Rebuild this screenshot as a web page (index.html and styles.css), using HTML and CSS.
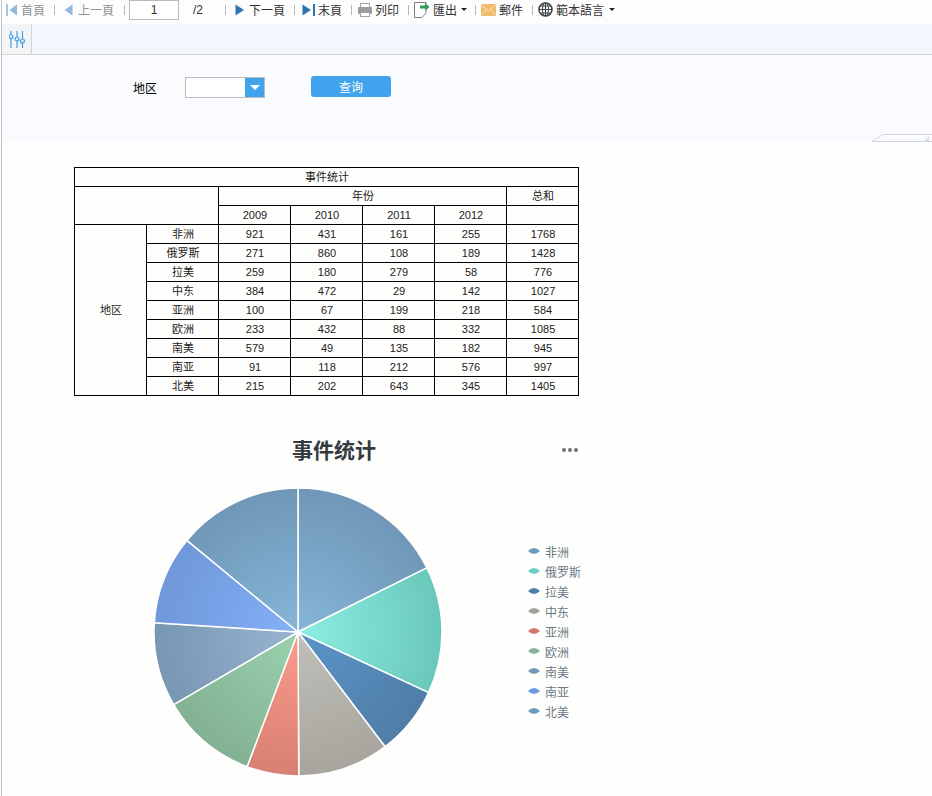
FILE: index.html
```html
<!DOCTYPE html>
<html lang="zh">
<head>
<meta charset="utf-8">
<title>事件统计</title>
<link rel="stylesheet" href="styles.css">
</head>
<body>
<div class="page">
<div class="toolbar">
  <span class="tool dim"><svg class="ic" width="12" height="14" viewBox="0 0 12 14"><rect x="0" y="1" width="2" height="12" fill="#a9c6e0"/><path d="M11 1.500V12.500L3.500 7Z" fill="#8fb8dc"/></svg>首頁</span>
  <i class="sep s1"></i>
  <span class="tool dim prev"><svg class="ic" width="11" height="14" viewBox="0 0 11 14"><path d="M8.500 1.500V12.500L.5 7Z" fill="#8fb8dc"/></svg>上一頁</span>
  <i class="sep s2"></i>
  <span class="pager"><input class="page-input" value="1" aria-label="page"><span class="page-total">/2</span></span>
  <i class="sep s3"></i>
  <span class="tool next"><svg class="ic" width="11" height="14" viewBox="0 0 11 14"><path d="M.5 1.500V12.500L9 7Z" fill="#2f76b0"/></svg>下一頁</span>
  <i class="sep s4"></i>
  <span class="tool last"><svg class="ic" width="14" height="14" viewBox="0 0 14 14"><path d="M.5 1.500V12.500L9 7Z" fill="#2f76b0"/><rect x="11" y="1" width="2" height="12" fill="#2f76b0"/></svg>末頁</span>
  <i class="sep s5"></i>
  <span class="tool print"><svg class="ic" width="14" height="14" viewBox="0 0 14 14"><rect x="2.500" y=".5" width="9" height="5" fill="#fff" stroke="#a2a5a8"/><rect x="0" y="4" width="14" height="7" rx="1" fill="#999c9f"/><rect x="2.500" y="9.500" width="9" height="4" fill="#fff" stroke="#a2a5a8"/></svg>列印</span>
  <i class="sep s6"></i>
  <span class="tool export"><svg class="ic" width="16" height="17" viewBox="0 0 16 17"><path d="M.5 1.500H12V12L8 16.500H.5Z" fill="#fff" stroke="#808080"/><path d="M6 4.500H11V2L15.500 6 11 10V7.500H6Z" fill="#2f9e57"/></svg>匯出<b class="caret"></b></span>
  <i class="sep s7"></i>
  <span class="tool mail"><svg class="ic" width="15" height="12" viewBox="0 0 15 12"><rect width="15" height="12" fill="#efbb6c"/><path d="M0 .5 7.500 7 15 .5M0 11.500 5.500 5.500M15 11.500 9.500 5.500" fill="none" stroke="#fae3bf"/></svg>郵件</span>
  <i class="sep s8"></i>
  <span class="tool lang"><svg class="ic" width="15" height="15" viewBox="0 0 15 15"><circle cx="7.500" cy="7.500" r="6.500" fill="#fff" stroke="#3c4248" stroke-width="1.500"/><path d="M7.500 1V14M1 7.500H14M2.500 4H12.500M2.500 11H12.500" stroke="#3c4248"/><ellipse cx="7.500" cy="7.500" rx="3" ry="6.500" fill="none" stroke="#3c4248"/></svg>範本語言<b class="caret"></b></span>
</div>
<div class="tabbar">
  <span class="tab"><svg width="16" height="17" viewBox="0 0 16 17"><g stroke="#42a0e6" stroke-width="1.200" fill="#dcecf9"><path d="M2 0V17M8 0V17M13.500 0V17"/><circle cx="2" cy="5.500" r="2"/><circle cx="8" cy="8" r="2"/><circle cx="13.500" cy="10" r="2"/></g></svg></span>
</div>
<form class="filter">
  <label class="filter-label">地区</label>
  <span class="combo"><span class="combo-field"></span><span class="combo-btn"><i></i></span></span>
  <button type="button" class="query">查询</button>
  <svg class="handle" width="60" height="8" viewBox="0 0 60 8"><path d="M0 7.500 11 .5H60M0 7.500H60" fill="none" stroke="#d4d6da"/><path d="M52 7 57 2V7Z" fill="#cde2f2"/></svg>
</form>
<main class="report">
  <table class="grid">
    <colgroup><col><col><col><col><col><col><col></colgroup>
    <tr><td colspan="7">事件统计</td></tr>
    <tr><td colspan="2" rowspan="2"></td><td colspan="4">年份</td><td>总和</td></tr>
    <tr><td>2009</td><td>2010</td><td>2011</td><td>2012</td><td></td></tr>
    <tr><td rowspan="9">地区</td><td>非洲</td><td>921</td><td>431</td><td>161</td><td>255</td><td>1768</td></tr>
    <tr><td>俄罗斯</td><td>271</td><td>860</td><td>108</td><td>189</td><td>1428</td></tr>
    <tr><td>拉美</td><td>259</td><td>180</td><td>279</td><td>58</td><td>776</td></tr>
    <tr><td>中东</td><td>384</td><td>472</td><td>29</td><td>142</td><td>1027</td></tr>
    <tr><td>亚洲</td><td>100</td><td>67</td><td>199</td><td>218</td><td>584</td></tr>
    <tr><td>欧洲</td><td>233</td><td>432</td><td>88</td><td>332</td><td>1085</td></tr>
    <tr><td>南美</td><td>579</td><td>49</td><td>135</td><td>182</td><td>945</td></tr>
    <tr><td>南亚</td><td>91</td><td>118</td><td>212</td><td>576</td><td>997</td></tr>
    <tr><td>北美</td><td>215</td><td>202</td><td>643</td><td>345</td><td>1405</td></tr>
  </table>
  <section class="chart">
    <header class="chart-head">
      <h2 class="chart-title">事件统计</h2>
      <span class="chart-menu"><i></i><i></i><i></i></span>
    </header>
    <div class="chart-body">
      <svg class="pie" width="290" height="290" viewBox="153 487 290 290">
        <defs>
          <radialGradient id="g1" gradientUnits="userSpaceOnUse" cx="298" cy="632" r="144"><stop offset="0" stop-color="#86b6d8"/><stop offset="1" stop-color="#7097b7"/></radialGradient>
          <radialGradient id="g2" gradientUnits="userSpaceOnUse" cx="298" cy="632" r="144"><stop offset="0" stop-color="#8cefe2"/><stop offset="1" stop-color="#6ac8ba"/></radialGradient>
          <radialGradient id="g3" gradientUnits="userSpaceOnUse" cx="298" cy="632" r="144"><stop offset="0" stop-color="#5b95c8"/><stop offset="1" stop-color="#4f7da8"/></radialGradient>
          <radialGradient id="g4" gradientUnits="userSpaceOnUse" cx="298" cy="632" r="144"><stop offset="0" stop-color="#c0bfba"/><stop offset="1" stop-color="#a7a59d"/></radialGradient>
          <radialGradient id="g5" gradientUnits="userSpaceOnUse" cx="298" cy="632" r="144"><stop offset="0" stop-color="#fb9b8c"/><stop offset="1" stop-color="#d88073"/></radialGradient>
          <radialGradient id="g6" gradientUnits="userSpaceOnUse" cx="298" cy="632" r="144"><stop offset="0" stop-color="#9ad2ad"/><stop offset="1" stop-color="#83b193"/></radialGradient>
          <radialGradient id="g7" gradientUnits="userSpaceOnUse" cx="298" cy="632" r="144"><stop offset="0" stop-color="#98b4d0"/><stop offset="1" stop-color="#7897b3"/></radialGradient>
          <radialGradient id="g8" gradientUnits="userSpaceOnUse" cx="298" cy="632" r="144"><stop offset="0" stop-color="#84b0f8"/><stop offset="1" stop-color="#6f98da"/></radialGradient>
        </defs>
        <g stroke="#fff" stroke-width="1.500" stroke-linejoin="round">
          <path fill="url(#g1)" d="M298 632V488A144 144 0 0 1 426.900 567.800Z"/>
          <path fill="url(#g2)" d="M298 632L426.900 567.800A144 144 0 0 1 428.600 692.600Z"/>
          <path fill="url(#g3)" d="M298 632L428.600 692.600A144 144 0 0 1 385.100 746.700Z"/>
          <path fill="url(#g4)" d="M298 632L385.100 746.700A144 144 0 0 1 298.800 776Z"/>
          <path fill="url(#g5)" d="M298 632L298.800 776A144 144 0 0 1 247.100 766.700Z"/>
          <path fill="url(#g6)" d="M298 632L247.100 766.700A144 144 0 0 1 173.700 704.700Z"/>
          <path fill="url(#g7)" d="M298 632L173.700 704.700A144 144 0 0 1 154.300 622.800Z"/>
          <path fill="url(#g8)" d="M298 632L154.300 622.800A144 144 0 0 1 186.900 540.400Z"/>
          <path fill="url(#g1)" d="M298 632L186.900 540.400A144 144 0 0 1 298 488Z"/>
        </g>
      </svg>
      <ul class="legend">
        <li><i class="k1"></i>非洲</li>
        <li><i class="k2"></i>俄罗斯</li>
        <li><i class="k3"></i>拉美</li>
        <li><i class="k4"></i>中东</li>
        <li><i class="k5"></i>亚洲</li>
        <li><i class="k6"></i>欧洲</li>
        <li><i class="k7"></i>南美</li>
        <li><i class="k8"></i>南亚</li>
        <li><i class="k9"></i>北美</li>
      </ul>
    </div>
  </section>
</main>
</div>
</body>
</html>
```
FILE: styles.css
```css
* { box-sizing: border-box; }
html, body { margin: 0; padding: 0; }
body {
  width: 932px;
  height: 796px;
  overflow: hidden;
  background: #fefefc;
  color: #000;
  font: 12px "Liberation Sans", "Noto Sans CJK SC", sans-serif;
}
.page {
  height: 796px;
  margin-left: 1px;
  border-left: 1px solid #bfc0c4;
}
.toolbar {
  height: 24px;
  display: flex;
  align-items: center;
  padding: 0 0 5px 4px;
  background: #fdfdfe;
  color: #333;
}
.tool { display: inline-flex; align-items: center; gap: 3px; white-space: nowrap; }
.tool.dim { color: #8d9399; }
.last { gap: 2px; }
.ic { flex: none; }
.sep { flex: none; width: 1px; height: 10px; background: #b5b8bc; }
.s1 { margin: 0 9px 0 9px; }
.s2 { margin: 0 4px 0 10px; }
.s3 { margin: 0 9px 0 0; }
.s4 { margin: 0 7px 0 9px; }
.s5 { margin: 0 6px 0 9px; }
.s6, .s8 { margin: 0 5px 0 9px; }
.s7 { margin: 0 5px 0 8px; }
.pager { display: inline-flex; align-items: center; width: 96px; }
.page-input {
  width: 50px;
  height: 20px;
  padding: 0;
  border: 1px solid #b9b9b9;
  background: #fff;
  color: #333;
  text-align: center;
  font: 12px "Liberation Sans", sans-serif;
}
.page-total { margin-left: 14px; }
.caret {
  display: inline-block;
  margin-left: 1px;
  border: 3px solid transparent;
  border-top: 3px solid #222;
  border-bottom: 0;
}
.lang .caret { margin-left: 2px; }
.tabbar {
  height: 31px;
  border-bottom: 1px solid #d2d4d6;
  background: #f2f6fd;
}
.tab {
  display: flex;
  align-items: center;
  justify-content: center;
  width: 30px;
  height: 30px;
  padding-left: 1px;
  background: #f3f4f6;
  border-right: 1px solid #d2d4d6;
}
.filter {
  position: relative;
  height: 87px;
  background: #fafbfe;
  display: flex;
  align-items: flex-start;
  padding: 21px 0 0 131px;
}
.filter-label { width: 52px; padding-top: 2px; line-height: 23px; font-weight: 400; }
.combo {
  display: flex;
  width: 80px;
  height: 21px;
  margin-top: 1px;
  border: 1px solid #b9bbbd;
  background: #fff;
}
.combo-field { flex: 1; }
.combo-btn {
  width: 19px;
  background: #3fa4ec;
  display: flex;
  align-items: center;
  justify-content: center;
}
.combo-btn i {
  border: 5px solid transparent;
  border-top: 5px solid #fff;
  border-bottom: 0;
}
.query {
  width: 80px;
  height: 21px;
  margin-left: 46px;
  padding: 0;
  border: 0;
  border-radius: 3px;
  background: #42a4ee;
  color: #fff;
  font: 12px "Liberation Sans", "Noto Sans CJK SC", sans-serif;
}
.handle { position: absolute; right: 0; bottom: 0; }
.report { padding: 25px 0 0 72px; }
.grid {
  width: 505px;
  table-layout: fixed;
  border-collapse: collapse;
  font-size: 11px;
}
.grid col { width: 72px; }
.grid td {
  height: 19px;
  padding: 0 0 0 1px;
  border: 1px solid #000;
  text-align: center;
  line-height: 14px;
  color: #222;
}
.chart { width: 510px; }
.chart-head {
  display: flex;
  align-items: center;
  height: 91px;
  padding: 18px 0 0 218px;
}
.chart-title {
  margin: 0;
  font-size: 21px;
  font-weight: 700;
  color: #333a40;
  line-height: 30px;
}
.chart-menu { display: flex; gap: 2px; margin: -2px 0 0 186px; }
.chart-menu i { width: 4px; height: 4px; border-radius: 50%; background: #6f7378; }
.chart-body { display: flex; align-items: flex-start; margin-left: 79px; }
.pie { flex: none; display: block; }
.legend {
  list-style: none;
  margin: 54px 0 0 85px;
  padding: 0;
  font-size: 12px;
  color: #6b7a87;
}
.legend li { display: flex; align-items: center; height: 20px; white-space: nowrap; }
.legend i {
  width: 12px;
  height: 8px;
  margin-right: 5px;
  clip-path: path("M0 4Q6 -2 12 4Q6 10 0 4Z");
}
.k1, .k9 { background: #6e9cbe; }
.k2 { background: #6fcec2; }
.k3 { background: #4e7fab; }
.k4 { background: #a0a09c; }
.k5 { background: #cf7a6c; }
.k6 { background: #88b496; }
.k7 { background: #7499b8; }
.k8 { background: #7099e0; }
```
